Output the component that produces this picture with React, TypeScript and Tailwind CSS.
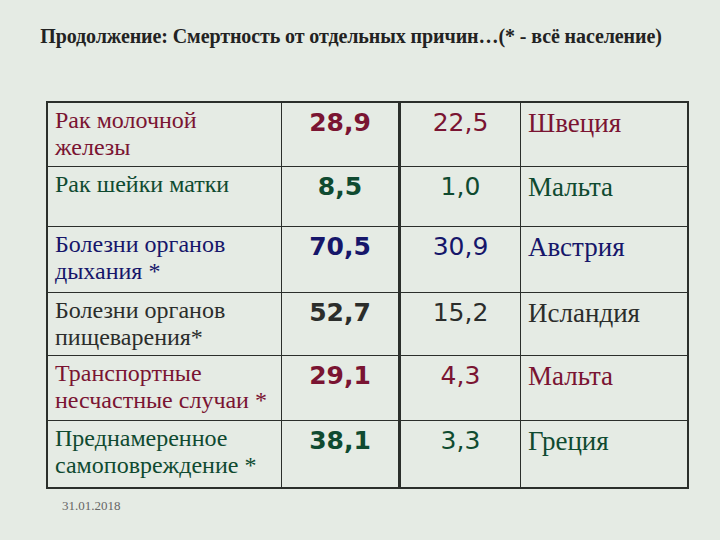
const rows = [
  { cause: ["Рак молочной", "железы"], rate: "28,9", min: "22,5", country: "Швеция", color: "text-[#7a1432]", h: "h-[64px]" },
  { cause: ["Рак шейки матки"], rate: "8,5", min: "1,0", country: "Мальта", color: "text-[#0f4a30]", h: "h-[60px]" },
  { cause: ["Болезни органов", "дыхания *"], rate: "70,5", min: "30,9", country: "Австрия", color: "text-[#16166a]", h: "h-[66px]" },
  { cause: ["Болезни органов", "пищеварения*"], rate: "52,7", min: "15,2", country: "Исландия", color: "text-[#2b2d2b]", h: "h-[63px]" },
  { cause: ["Транспортные", "несчастные случаи *"], rate: "29,1", min: "4,3", country: "Мальта", color: "text-[#7a1432]", h: "h-[65px]" },
  { cause: ["Преднамеренное", "самоповреждение *"], rate: "38,1", min: "3,3", country: "Греция", color: "text-[#0f4a30]", h: "h-[66px]" },
];

export default function App() {
  return (
    <div className="w-[720px] h-[540px] bg-[#e5ebe4] relative overflow-hidden">
      <h1 className="pt-[22px] text-center pr-[18px] font-['Liberation_Serif',serif] font-bold text-[20px] leading-[28px] text-[#222] tracking-[-0.1px]">
        Продолжение: Смертность от отдельных причин…(* - всё население)
      </h1>

      <div className="ml-[46px] mt-[51px] w-[643px] border-2 border-[#2b2f2b]">
        {rows.map((r, i) => (
          <div
            key={i}
            className={`flex ${r.h} ${i < rows.length - 1 ? "border-b border-[#2b2f2b]" : ""} ${r.color}`}
          >
            <div className="w-[234px] border-r border-[#2b2f2b] pl-[7px] pt-[4px] font-['Liberation_Serif',serif] text-[24px] leading-[27px]">
              {r.cause.map((c) => (
                <div key={c}>{c}</div>
              ))}
            </div>
            <div className="w-[119px] border-r-[3px] border-[#2b2f2b] pt-[4px] text-center font-['DejaVu_Sans',sans-serif] font-bold text-[25px] leading-[32px]">
              {r.rate}
            </div>
            <div className="w-[120px] border-r border-[#2b2f2b] pt-[4px] text-center font-['DejaVu_Sans',sans-serif] text-[25px] leading-[32px]">
              {r.min}
            </div>
            <div className="w-[166px] pl-[7px] pt-[3px] font-['Liberation_Serif',serif] text-[27px] leading-[34px]">
              {r.country}
            </div>
          </div>
        ))}
      </div>

      <div className="ml-[62px] mt-[7px] font-['Liberation_Serif',serif] text-[13px] text-[#666]">
        31.01.2018
      </div>
    </div>
  );
}
